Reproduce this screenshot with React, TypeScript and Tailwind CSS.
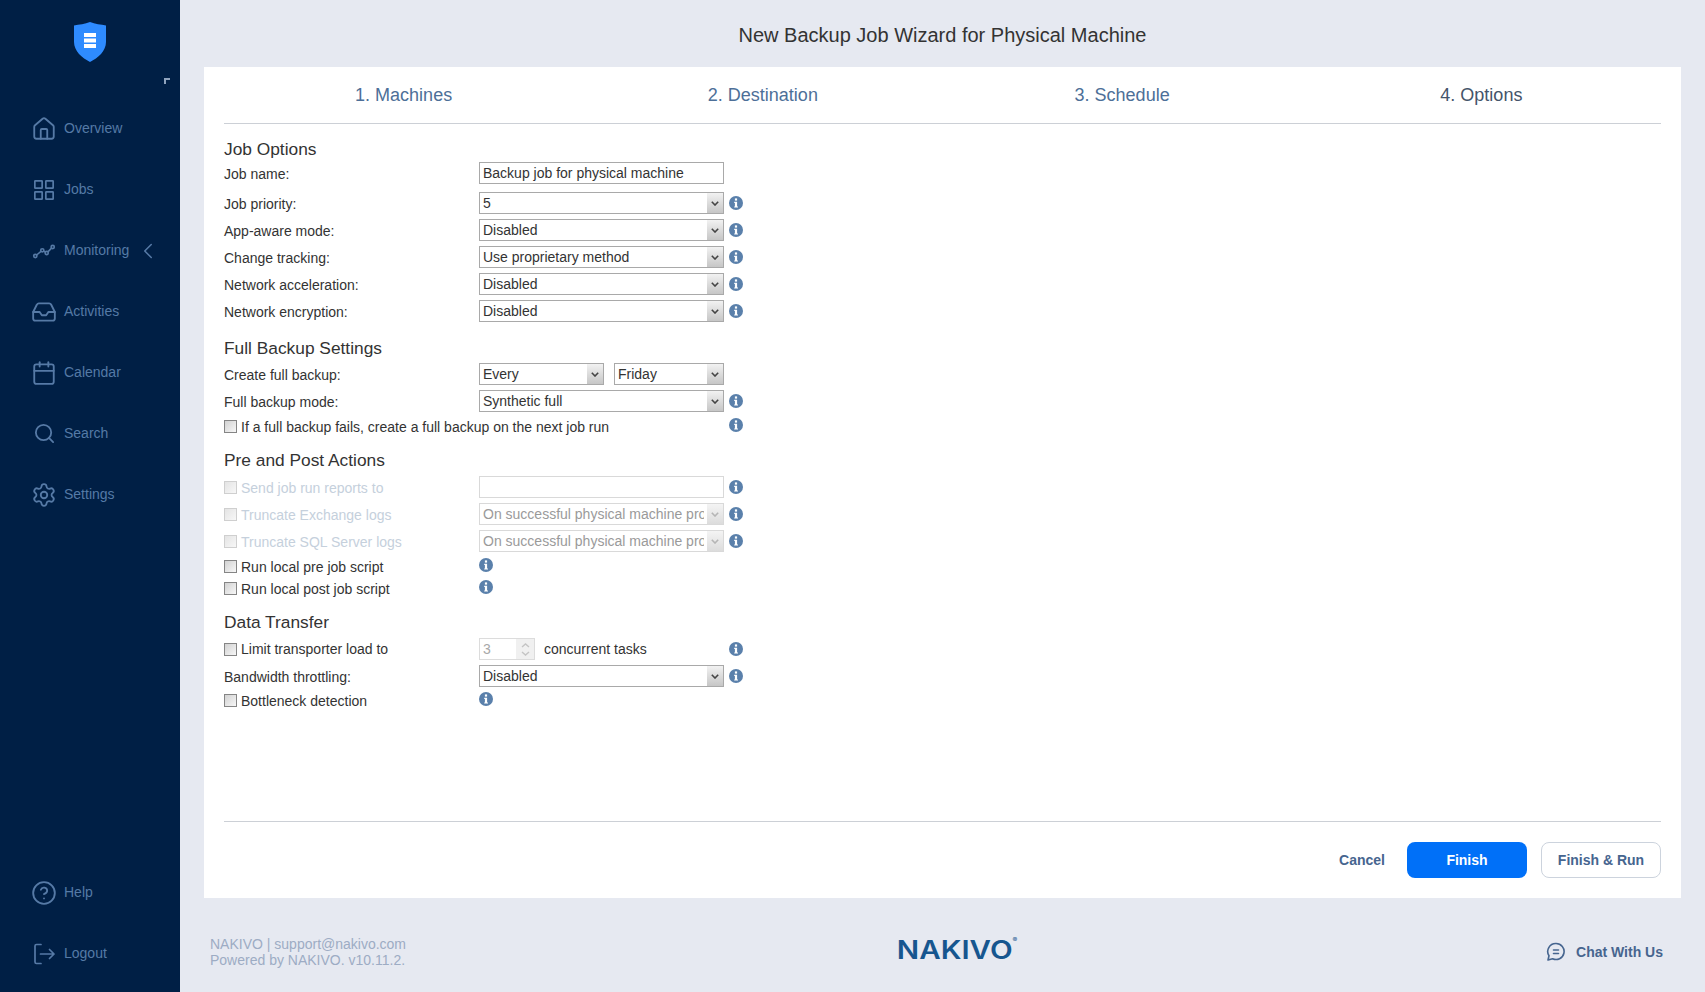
import React from 'react';
import { House, ChevronLeft, Inbox, Calendar, Search, Settings, CircleHelp } from 'lucide-react';

const ICON = { size: 26, strokeWidth: 1.7 };

const JobsIcon = () => (
  <svg width="26" height="26" viewBox="0 0 26 26" fill="none" stroke="currentColor" strokeWidth="1.7">
    <rect x="3.85" y="3.85" width="7.3" height="7.3" rx="0.5" />
    <rect x="14.85" y="3.85" width="7.3" height="7.3" rx="0.5" />
    <rect x="3.85" y="14.85" width="7.3" height="7.3" rx="0.5" />
    <rect x="14.85" y="14.85" width="7.3" height="7.3" rx="0.5" />
  </svg>
);

const MonitoringIcon = () => (
  <svg width="26" height="26" viewBox="0 0 26 26" fill="none" stroke="currentColor" strokeWidth="1.6">
    <circle cx="4.3" cy="18" r="1.6" />
    <circle cx="11.3" cy="12.3" r="1.6" />
    <circle cx="15.7" cy="15" r="1.6" />
    <circle cx="21.7" cy="9" r="1.6" />
    <path d="M5.6 17 10 13.4M12.8 13.2l1.4 .9M16.9 13.9l3.6-3.8" />
  </svg>
);

const LogoutIcon = () => (
  <svg width="26" height="26" viewBox="0 0 26 26" fill="none" stroke="currentColor" strokeWidth="1.7" strokeLinecap="round" strokeLinejoin="round">
    <path d="M10 3.5H5.5a1.5 1.5 0 0 0-1.5 1.5v16a1.5 1.5 0 0 0 1.5 1.5H10" />
    <path d="M9.5 13H23M18.5 8.5 23 13l-4.5 4.5" />
  </svg>
);

const ChatIcon = () => (
  <svg width="20" height="20" viewBox="0 0 20 20" fill="none" stroke="currentColor" strokeWidth="1.6" strokeLinecap="round" strokeLinejoin="round">
    <path d="M10 1.5a8 8 0 1 1-3.4 15.2L2 18l1-4.2A8 8 0 0 1 10 1.5Z" />
    <path d="M7.5 8h5M7.5 11.5h5" />
  </svg>
);

const ShieldLogo = () => (
  <svg width="32" height="40" viewBox="0 0 32 40">
    <path d="M16 0 C21 2 27 2.5 32 3.5 V20 C32 29 24 36 16 40 C8 36 0 29 0 20 V3.5 C5 2.5 11 2 16 0Z" fill="#2e8bff" />
    <rect x="10" y="11" width="12" height="4" fill="#fff" />
    <rect x="10" y="16.5" width="12" height="4" fill="#fff" />
    <rect x="10" y="22" width="12" height="4" fill="#fff" />
  </svg>
);

const InfoIcon = ({ className = '' }: { className?: string }) => (
  <svg width="14" height="14" viewBox="0 0 14 14" className={`shrink-0 ${className}`}>
    <circle cx="7" cy="7" r="7" fill="#5a80ab" />
    <rect x="5.9" y="2.4" width="2.2" height="2.2" fill="#fff" />
    <path d="M5.2 5.7H8.1V10.4H9V11.6H5.2V10.4H5.9V6.9H5.2Z" fill="#fff" />
  </svg>
);

const NavItem = ({ icon, label, extra }: { icon: React.ReactNode; label: string; extra?: React.ReactNode }) => (
  <div className="h-[61px] flex items-center pl-[31px] text-[#567aa6]">
    <span className="w-[26px] h-[26px] flex items-center justify-center">{icon}</span>
    <span className="ml-[7px] text-[14px] text-[#557aa6]">{label}</span>
    {extra}
  </div>
);

const Sidebar = () => (
  <aside className="w-[180px] shrink-0 bg-[#001f45] flex flex-col pb-[8px]">
    <div className="relative h-[98px] flex justify-center pt-[22px]">
      <ShieldLogo />
      <span className="absolute left-[164px] top-[78px] w-[6px] h-[6px] border-t-2 border-l-2 border-[#8fa3bd]" />
    </div>
    <NavItem icon={<House {...ICON} />} label="Overview" />
    <NavItem icon={<JobsIcon />} label="Jobs" />
    <NavItem icon={<MonitoringIcon />} label="Monitoring" extra={<ChevronLeft size={26} strokeWidth={1.4} className="ml-[6px]" />} />
    <NavItem icon={<Inbox {...ICON} />} label="Activities" />
    <NavItem icon={<Calendar {...ICON} />} label="Calendar" />
    <NavItem icon={<Search size={23} strokeWidth={1.9} />} label="Search" />
    <NavItem icon={<Settings {...ICON} />} label="Settings" />
    <div className="flex-1" />
    <NavItem icon={<CircleHelp {...ICON} />} label="Help" />
    <NavItem icon={<LogoutIcon />} label="Logout" />
  </aside>
);

const Heading = ({ children, className = '' }: { children: React.ReactNode; className?: string }) => (
  <h3 className={`h-[22px] leading-[22px] text-[17.33px] text-[#333] ${className}`}>{children}</h3>
);

const Select = ({ value, disabled, className = 'w-[245px]' }: { value: string; disabled?: boolean; className?: string }) => (
  <div className={`relative h-[22px] ${className}`}>
    <select
      disabled={disabled}
      defaultValue={value}
      className={`block appearance-none w-full h-full bg-white border pl-[3px] pr-[19px] text-[14px] leading-[20px] rounded-none outline-none opacity-100 ${disabled ? 'border-[#d9d9d9] text-[#9a9a9a]' : 'border-[#a9a9a9] text-[#333]'}`}
    >
      <option>{value}</option>
    </select>
    <span className={`absolute right-px top-px bottom-px w-[16px] flex items-center justify-center bg-gradient-to-b ${disabled ? 'from-[#f4f4f4] to-[#dcdcdc]' : 'from-[#f2f2f2] to-[#c6c6c6]'}`}>
      <svg width="8" height="5" viewBox="0 0 8 5" fill="none" stroke={disabled ? '#b5b5b5' : '#444'} strokeWidth="1.6">
        <path d="M.8 .8 4 4 7.2 .8" />
      </svg>
    </span>
  </div>
);

const Field = ({ label, className = '', muted, children }: { label: React.ReactNode; className?: string; muted?: boolean; children: React.ReactNode }) => (
  <div className={`flex items-center h-[22px] ${className}`}>
    <div className={`w-[255px] shrink-0 pt-[2px] text-[14px] ${muted ? 'text-[#c5d0dc]' : 'text-[#333]'}`}>{label}</div>
    {children}
  </div>
);

const Check = ({ label, muted }: { label: string; muted?: boolean }) => (
  <label className={`flex items-center text-[14px] ${muted ? 'text-[#c5d0dc]' : 'text-[#333]'}`}>
    <input
      type="checkbox"
      className={`appearance-none w-[13px] h-[13px] -mt-[1px] border bg-gradient-to-br mr-[4px] ${muted ? 'border-[#cfcfcf] from-[#e4e4e4] to-[#f7f7f7]' : 'border-[#858585] from-[#d2d2d2] to-[#f7f7f7]'}`}
    />
    {label}
  </label>
);

const CheckRow = ({ label, infoLeft, className = '' }: { label: string; infoLeft?: boolean; className?: string }) => (
  <div className={`flex items-center h-[20px] ${className}`}>
    <div className={`shrink-0 ${infoLeft ? 'w-[255px]' : 'w-[505px]'}`}>
      <Check label={label} />
    </div>
    <InfoIcon className="-mt-[4px]" />
  </div>
);

const Form = () => (
  <div className="flex-1">
    <Heading className="mt-[14px]">Job Options</Heading>
    <Field label="Job name:" className="mt-[2px]">
      <input
        readOnly
        defaultValue="Backup job for physical machine"
        className="w-[245px] h-[22px] border border-[#a9a9a9] pl-[3px] text-[14px] text-[#333] outline-none"
      />
    </Field>
    <Field label="Job priority:" className="mt-[8px]">
      <Select value="5" />
      <InfoIcon className="ml-[5px]" />
    </Field>
    <Field label="App-aware mode:" className="mt-[5px]">
      <Select value="Disabled" />
      <InfoIcon className="ml-[5px]" />
    </Field>
    <Field label="Change tracking:" className="mt-[5px]">
      <Select value="Use proprietary method" />
      <InfoIcon className="ml-[5px]" />
    </Field>
    <Field label="Network acceleration:" className="mt-[5px]">
      <Select value="Disabled" />
      <InfoIcon className="ml-[5px]" />
    </Field>
    <Field label="Network encryption:" className="mt-[5px]">
      <Select value="Disabled" />
      <InfoIcon className="ml-[5px]" />
    </Field>

    <Heading className="mt-[15px]">Full Backup Settings</Heading>
    <Field label="Create full backup:" className="mt-[4px]">
      <Select value="Every" className="w-[125px]" />
      <Select value="Friday" className="w-[110px] ml-[10px]" />
    </Field>
    <Field label="Full backup mode:" className="mt-[5px]">
      <Select value="Synthetic full" />
      <InfoIcon className="ml-[5px]" />
    </Field>
    <CheckRow label="If a full backup fails, create a full backup on the next job run" className="mt-[5px]" />

    <Heading className="mt-[12px]">Pre and Post Actions</Heading>
    <Field label={<Check muted label="Send job run reports to" />} muted className="mt-[5px]">
      <input disabled className="w-[245px] h-[22px] border border-[#d9d9d9] bg-white" />
      <InfoIcon className="ml-[5px]" />
    </Field>
    <Field label={<Check muted label="Truncate Exchange logs" />} muted className="mt-[5px]">
      <Select disabled value="On successful physical machine processing" />
      <InfoIcon className="ml-[5px]" />
    </Field>
    <Field label={<Check muted label="Truncate SQL Server logs" />} muted className="mt-[5px]">
      <Select disabled value="On successful physical machine processing" />
      <InfoIcon className="ml-[5px]" />
    </Field>
    <CheckRow label="Run local pre job script" infoLeft className="mt-[5px]" />
    <CheckRow label="Run local post job script" infoLeft className="mt-[2px]" />

    <Heading className="mt-[12px]">Data Transfer</Heading>
    <Field label={<div className="-mt-[1px]"><Check label="Limit transporter load to" /></div>} className="mt-[5px]">
      <div className="relative w-[56px] h-[22px] border border-[#dcdcdc] pl-[3px] text-[14px] leading-[20px] text-[#a8a8a8]">
        3
        <span className="absolute right-0 top-0 bottom-0 w-[18px] flex flex-col items-center justify-center gap-[3px] bg-[#f0f0f0]">
          <svg width="9" height="5" viewBox="0 0 9 5" fill="none" stroke="#c4c4c4" strokeWidth="1.4"><path d="M1 4l3.5-3L8 4" /></svg>
          <svg width="9" height="5" viewBox="0 0 9 5" fill="none" stroke="#c4c4c4" strokeWidth="1.4"><path d="M1 1l3.5 3L8 1" /></svg>
        </span>
      </div>
      <span className="w-[194px] pl-[9px] text-[14px] text-[#333]">concurrent tasks</span>
      <InfoIcon />
    </Field>
    <Field label="Bandwidth throttling:" className="mt-[5px]">
      <Select value="Disabled" />
      <InfoIcon className="ml-[5px]" />
    </Field>
    <CheckRow label="Bottleneck detection" infoLeft className="mt-[4px]" />
  </div>
);

const STEPS = ['1. Machines', '2. Destination', '3. Schedule', '4. Options'];

export default function App() {
  return (
    <div className="flex h-[992px] w-[1705px] overflow-hidden bg-[#e6e9f1] font-['Liberation_Sans',Arial,sans-serif]">
      <Sidebar />
      <main className="flex-1 flex flex-col min-w-0">
        <h1 className="h-[67px] pt-[2px] flex items-center justify-center text-[20px] text-[#333]">
          New Backup Job Wizard for Physical Machine
        </h1>
        <section className="ml-[24px] mr-[24px] h-[831px] bg-white px-[20px] flex flex-col">
          <div className="grid grid-cols-4 h-[57px] border-b border-[#ccd0d6] items-center text-center text-[18px] text-[#4d6f98]">
            {STEPS.map((step, i) => (
              <div key={step} className={i === 3 ? 'text-[#44546a]' : ''}>{step}</div>
            ))}
          </div>
          <Form />
          <div className="border-t border-[#ccd0d6] pt-[20px] pb-[20px] flex justify-end items-center text-[14px] font-bold">
            <button className="mr-[22px] text-[#46658f]">Cancel</button>
            <button className="w-[120px] h-[36px] rounded-[8px] bg-[#0070f8] text-white">Finish</button>
            <button className="ml-[14px] w-[120px] h-[36px] rounded-[8px] border border-[#ccd3dd] text-[#46658f]">Finish &amp; Run</button>
          </div>
        </section>
        <footer className="flex-1 grid grid-cols-3 items-center pt-[14px] pl-[30px] pr-[42px]">
          <div className="text-[14px] leading-[16px] text-[#9dacc4]">
            <p>NAKIVO | support@nakivo.com</p>
            <p>Powered by NAKIVO. v10.11.2.</p>
          </div>
          <div className="flex justify-center pl-[41px] -mt-[4px]">
            <span className="font-['Inter',sans-serif] text-[25px] leading-none font-semibold text-[#16568f] scale-x-[1.18]">
              NAKIVO<sup className="text-[6px] font-normal align-[14px]">®</sup>
            </span>
          </div>
          <div className="flex justify-end items-center text-[14px] font-bold text-[#46658f]">
            <ChatIcon />
            <span className="ml-[10px]">Chat With Us</span>
          </div>
        </footer>
      </main>
    </div>
  );
}
